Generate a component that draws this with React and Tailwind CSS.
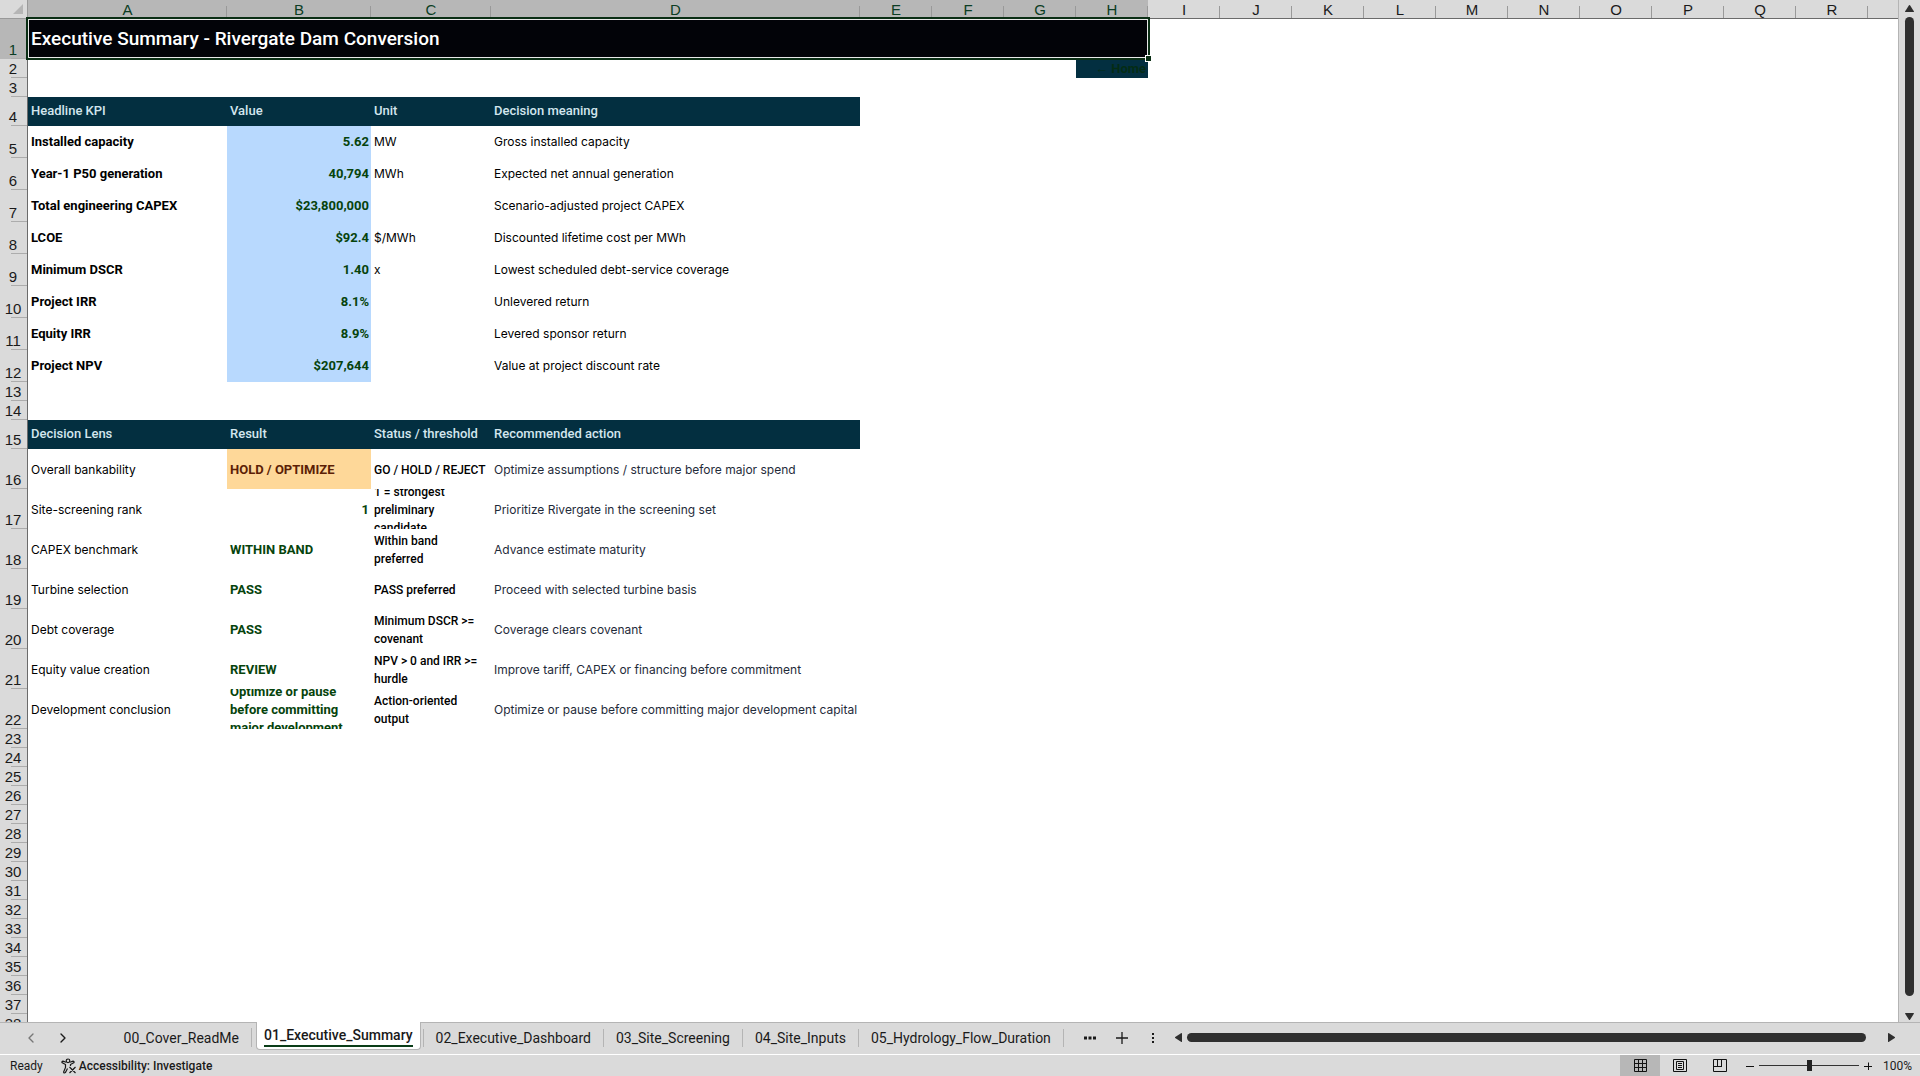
import React, { useState } from 'react';
import { ChevronLeft, ChevronRight } from 'lucide-react';

const COLUMNS = [
  { id: 'A', width: 'w-[199px]' },
  { id: 'B', width: 'w-36' },
  { id: 'C', width: 'w-[120px]' },
  { id: 'D', width: 'w-[369px]' },
  ...'EFGHIJKLMNOPQR'.split('').map((id) => ({ id, width: 'w-[72px]' })),
];

const SELECTED_COLUMNS = 'ABCDEFGH';

const KPIS = [
  ['Installed capacity', '5.62', 'MW', 'Gross installed capacity'],
  ['Year-1 P50 generation', '40,794', 'MWh', 'Expected net annual generation'],
  ['Total engineering CAPEX', '$23,800,000', '', 'Scenario-adjusted project CAPEX'],
  ['LCOE', '$92.4', '$/MWh', 'Discounted lifetime cost per MWh'],
  ['Minimum DSCR', '1.40', 'x', 'Lowest scheduled debt-service coverage'],
  ['Project IRR', '8.1%', '', 'Unlevered return'],
  ['Equity IRR', '8.9%', '', 'Levered sponsor return'],
  ['Project NPV', '$207,644', '', 'Value at project discount rate'],
];

const DECISIONS = [
  {
    lens: 'Overall bankability',
    result: 'HOLD / OPTIMIZE',
    status: 'GO / HOLD / REJECT',
    action: 'Optimize assumptions / structure before major spend',
    resultClass: 'bg-[#fed899] text-[#5c1f06]',
  },
  {
    lens: 'Site-screening rank',
    result: '1',
    status: '1 = strongest preliminary candidate',
    action: 'Prioritize Rivergate in the screening set',
    resultClass: 'text-[#06430c] justify-end',
  },
  {
    lens: 'CAPEX benchmark',
    result: 'WITHIN BAND',
    status: 'Within band preferred',
    action: 'Advance estimate maturity',
  },
  {
    lens: 'Turbine selection',
    result: 'PASS',
    status: 'PASS preferred',
    action: 'Proceed with selected turbine basis',
  },
  {
    lens: 'Debt coverage',
    result: 'PASS',
    status: 'Minimum DSCR >= covenant',
    action: 'Coverage clears covenant',
  },
  {
    lens: 'Equity value creation',
    result: 'REVIEW',
    status: 'NPV > 0 and IRR >= hurdle',
    action: 'Improve tariff, CAPEX or financing before commitment',
  },
  {
    lens: 'Development conclusion',
    result: 'Optimize or pause before committing major development',
    status: 'Action-oriented output',
    action: 'Optimize or pause before committing major development capital',
  },
];

const SHEETS = [
  '00_Cover_ReadMe',
  '01_Executive_Summary',
  '02_Executive_Dashboard',
  '03_Site_Screening',
  '04_Site_Inputs',
  '05_Hydrology_Flow_Duration',
];

function Row({ number, height = 'h-[19px]', selected, children }) {
  return (
    <tr>
      <th scope="row" className={`p-0 font-normal border-r border-[#6b6b6b] font-['Liberation_Sans',sans-serif] ${selected ? 'bg-[#b7b7b7] text-[#0b3d24]' : 'bg-[#dadada] text-[#1a1a1a]'}`}>
        <div className={`flex flex-col justify-end items-end ${height}`}>
          <span className="w-full pr-px text-center text-[15px] leading-4">{number}</span>
          <span className="w-4 h-px shrink-0 bg-[#acacac]" />
        </div>
      </th>
      {children}
    </tr>
  );
}

function Cell({ height, className = '', children }) {
  return (
    <td className="p-0">
      <div className={`flex items-center pl-[3px] pr-[2px] overflow-hidden ${height} ${className}`}>
        {children && <span>{children}</span>}
      </div>
    </td>
  );
}

function HeaderRow({ number, labels }) {
  return (
    <Row number={number} height="h-[29px]">
      {labels.map((label) => (
        <Cell key={label} height="h-[29px]" className="pb-px bg-[#032f40] text-[#d3e6ee] font-[Roboto,sans-serif] text-[13px] font-medium whitespace-nowrap">
          {label}
        </Cell>
      ))}
    </Row>
  );
}

function EmptyRows({ from, to }) {
  const rows = [];
  for (let n = from; n <= to; n++) {
    rows.push(<Row key={n} number={n} />);
  }
  return rows;
}

function Sheet() {
  return (
    <table className="w-full table-fixed border-separate border-spacing-0 font-[Inter,sans-serif] text-[12px] leading-[18px] text-black">
      <colgroup>
        <col className="w-7" />
        {COLUMNS.map((col) => (
          <col key={col.id} className={col.width} />
        ))}
        <col />
      </colgroup>
      <thead className="font-['Liberation_Sans',sans-serif]">
        <tr>
          <th className="p-0 bg-[#dadada] border-b border-r border-[#999]">
            <svg className="ml-auto mr-1 w-[10px] h-[10px]" viewBox="0 0 10 10" aria-hidden="true">
              <path d="M10 0V10H0Z" fill="#b5b5b5" />
            </svg>
          </th>
          {COLUMNS.map(({ id }) => {
            const selected = SELECTED_COLUMNS.includes(id);
            return (
              <th key={id} scope="col" className={`p-0 font-normal border-b border-[#6b6b6b] ${selected ? 'bg-[#b7b7b7] text-[#0b3d24]' : 'bg-[#dadada] text-[#1a1a1a]'}`}>
                <div className="flex items-end h-[18px]">
                  <span className="flex-1 pl-px text-[15px] leading-4">{id}</span>
                  <span className="w-px h-3 bg-[#999]" />
                </div>
              </th>
            );
          })}
          <th className="p-0 bg-[#dadada] border-b border-[#6b6b6b]" />
        </tr>
      </thead>
      <tbody>
        <Row number={1} height="h-10" selected>
          <td colSpan={8} className="p-0">
            <div className="relative flex items-center h-10 px-[3px] bg-[#020308] text-white font-[Roboto,sans-serif] text-[19px] font-medium">
              Executive Summary - Rivergate Dam Conversion
              {/* selection frame */}
              <span className="absolute -inset-x-[2px] -top-[2px] -bottom-px border-2 border-[#0a2e14]">
                <span className="block h-full border border-[#e8e8e8]" />
                <span className="absolute -right-[3px] -bottom-[3px] w-[5px] h-[5px] bg-[#0a2e14] outline outline-white" />
              </span>
            </div>
          </td>
        </Row>
        <Row number={2}>
          <td colSpan={7} />
          <Cell height="h-[18px]" className="justify-end bg-[#032f40] font-[Roboto,sans-serif] text-[13px] font-bold">
            <a href="#home" className="text-[#042c14]">← Home</a>
          </Cell>
        </Row>
        <Row number={3} />
        <HeaderRow number={4} labels={['Headline KPI', 'Value', 'Unit', 'Decision meaning']} />
        {KPIS.map(([name, value, unit, meaning], i) => (
          <Row key={name} number={i + 5} height="h-8">
            <Cell height="h-8" className="font-[Roboto,sans-serif] text-[13px] font-bold">{name}</Cell>
            <Cell height="h-8" className="justify-end bg-[#b8d9fe] text-[#06430c] font-[Roboto,sans-serif] text-[13px] font-bold">{value}</Cell>
            <Cell height="h-8">{unit}</Cell>
            <Cell height="h-8">{meaning}</Cell>
          </Row>
        ))}
        <EmptyRows from={13} to={14} />
        <HeaderRow number={15} labels={['Decision Lens', 'Result', 'Status / threshold', 'Recommended action']} />
        {DECISIONS.map((d, i) => (
          <Row key={d.lens} number={i + 16} height="h-10">
            <Cell height="h-10 pt-[2px]">{d.lens}</Cell>
            <Cell height="h-10 pt-[2px]" className={`font-[Roboto,sans-serif] text-[13px] font-bold ${d.resultClass || 'text-[#06430c]'}`}>{d.result}</Cell>
            <Cell height="h-10 pt-[2px]" className="font-[Roboto,sans-serif] font-medium">{d.status}</Cell>
            <Cell height="h-10 pt-[2px]" className="text-[#1f2b3a] whitespace-nowrap">{d.action}</Cell>
          </Row>
        ))}
        <EmptyRows from={23} to={38} />
      </tbody>
    </table>
  );
}

function Triangle({ className = '' }) {
  return (
    <svg className={`w-[9px] h-[9px] shrink-0 ${className}`} viewBox="0 0 9 9" aria-hidden="true">
      <path d="M4 1.2Q4.5.6 5 1.2L9 7.4Q9 8 8.4 8H.6Q0 8 0 7.4Z" fill="#2f2f2f" />
    </svg>
  );
}

function SheetTabs({ active, onSelect }) {
  return (
    <div className="flex h-8 border-t border-[#b4b4b4] text-sm text-[#1a1a1a]">
      <div className="flex items-center gap-4 w-[252px] pl-[23px] mt-[5px] mb-[7px] border-r border-[#b4b4b4]">
        <button type="button" aria-label="Previous sheet">
          <ChevronLeft className="w-4 h-4 text-[#777]" strokeWidth={2} />
        </button>
        <button type="button" aria-label="Next sheet">
          <ChevronRight className="w-4 h-4" strokeWidth={2} />
        </button>
        <button type="button" className="ml-auto pr-3" onClick={() => onSelect(SHEETS[0])}>
          {SHEETS[0]}
        </button>
      </div>
      {SHEETS.slice(1).map((name) =>
        name === active ? (
          <div key={name} className="flex pl-1">
            <button type="button" className="h-7 -mt-px px-[7px] rounded-b bg-white border-x border-b border-[#b4b4b4] font-medium">
              <span className="block border-b-2 border-[#0a3d18] leading-5">{name}</span>
            </button>
            <span className="w-px h-[18px] ml-[2px] mt-[6px] bg-[#b4b4b4]" />
          </div>
        ) : (
          <div key={name} className="flex items-center pb-[2px]">
            <button type="button" className="px-3" onClick={() => onSelect(name)}>{name}</button>
            <span className="w-px h-[18px] bg-[#b4b4b4]" />
          </div>
        )
      )}
      <div className="flex items-center flex-1 pl-5 pb-[2px]">
        <button type="button" aria-label="More sheets" className="w-3">
          <svg viewBox="0 0 12 4" className="w-3 h-1"><path d="M0 .5h3v3H0zM4.500 .5h3v3h-3zM9 .5h3v3H9z" fill="#1a1a1a" /></svg>
        </button>
        <button type="button" aria-label="New sheet" className="ml-5">
          <svg viewBox="0 0 12 12" className="w-3 h-3"><path d="M6 0v12M0 6h12" stroke="#1a1a1a" strokeWidth="1.3" /></svg>
        </button>
        <span className="ml-6 flex flex-col gap-[2px]">
          <span className="w-[2px] h-[2px] bg-[#1a1a1a]" />
          <span className="w-[2px] h-[2px] bg-[#1a1a1a]" />
          <span className="w-[2px] h-[2px] bg-[#1a1a1a]" />
        </span>
        <Triangle className="ml-5 -rotate-90" />
        <span className="flex-1 h-[9px] ml-1 mr-[21px] rounded-full bg-[#2f2f2f]" />
        <Triangle className="mr-6 rotate-90" />
      </div>
    </div>
  );
}

function StatusBar() {
  const [zoom, setZoom] = useState(100);

  return (
    <div className="flex items-center h-[22px] border-t border-white text-xs text-[#1a1a1a]">
      <span className="pl-[10px]">Ready</span>
      <button type="button" className="flex items-center gap-[2px] ml-[18px] font-medium">
        <svg viewBox="0 0 16 16" className="w-4 h-4" fill="none" stroke="#1a1a1a" strokeWidth="1.2">
          <circle cx="7" cy="2.800" r="1.800" />
          <path d="M5.200 4.300L2 3.200Q.6 3.200 1 4.600L4.500 6.500V9.500L2.600 14Q3 15.600 4.400 14.600L6.500 10.500M8.800 4.300L12 3.200Q13.400 3.200 13 4.600L9.500 6.500V8M8.500 9L14.500 15M14.500 9L8.500 15" />
        </svg>
        Accessibility: Investigate
      </button>
      <div className="flex items-center h-full ml-auto">
        <button type="button" aria-label="Normal view" className="flex items-center justify-center w-10 h-full bg-[#b7b7b7]">
          <svg viewBox="0 0 13 13" className="w-[13px] h-[13px]" fill="none" stroke="#111"><path d="M.5.5h12v12H.5zM4.500 0v13M8.500 0v13M0 4.500h13M0 8.500h13" /></svg>
        </button>
        <button type="button" aria-label="Page layout" className="flex items-center justify-center w-10 h-full">
          <svg viewBox="0 0 14 13" className="w-[14px] h-[13px]" fill="none" stroke="#111"><path d="M.5.5h13v12H.5zM3.500 2.500h7v8h-7zM5 4.500h4M5 6.500h4M5 8.500h4" /></svg>
        </button>
        <button type="button" aria-label="Page break preview" className="flex items-center justify-center w-10 h-full">
          <svg viewBox="0 0 14 13" className="w-[14px] h-[13px]" fill="none" stroke="#111"><path d="M.5.5h13v12H.5zM4.500 0v7.500M8.500 0v7.500M0 7.500h9" /></svg>
        </button>
        <button type="button" aria-label="Zoom out" className="ml-[6px]" onClick={() => setZoom(zoom - 10)}>
          <svg viewBox="0 0 8 8" className="w-2 h-2"><path d="M0 4.500h8" stroke="#111" /></svg>
        </button>
        <input
          type="range"
          aria-label="Zoom"
          min={10}
          max={190}
          value={zoom}
          onChange={(e) => setZoom(Number(e.target.value))}
          className="w-[100px] h-[11px] mx-[5px] appearance-none bg-transparent [&::-webkit-slider-runnable-track]:h-px [&::-webkit-slider-runnable-track]:bg-[#333] [&::-webkit-slider-thumb]:appearance-none [&::-webkit-slider-thumb]:w-[5px] [&::-webkit-slider-thumb]:h-[11px] [&::-webkit-slider-thumb]:-mt-[5px] [&::-webkit-slider-thumb]:bg-[#222]"
        />
        <button type="button" aria-label="Zoom in" onClick={() => setZoom(zoom + 10)}>
          <svg viewBox="0 0 8 8" className="w-2 h-2"><path d="M0 4.500h8M4.500 .5v8" stroke="#111" /></svg>
        </button>
        <span className="w-12 pr-2 text-right">{zoom}%</span>
      </div>
    </div>
  );
}

function App() {
  const [active, setActive] = useState('01_Executive_Summary');

  return (
    <div className="flex flex-col h-screen overflow-hidden bg-[#dadada] font-[Roboto,sans-serif]">
      <div className="flex flex-1 min-h-0">
        <div className="flex-1 min-w-0 overflow-hidden bg-white border-r border-[#b4b4b4]">
          <Sheet />
        </div>
        <div className="flex flex-col items-center w-[21px] pt-1">
          <Triangle />
          <span className="flex-1 w-[9px] mt-1 mb-4 rounded-full bg-[#2f2f2f]" />
          <Triangle className="mb-px rotate-180" />
        </div>
      </div>
      <SheetTabs active={active} onSelect={setActive} />
      <StatusBar />
    </div>
  );
}

export default App;
